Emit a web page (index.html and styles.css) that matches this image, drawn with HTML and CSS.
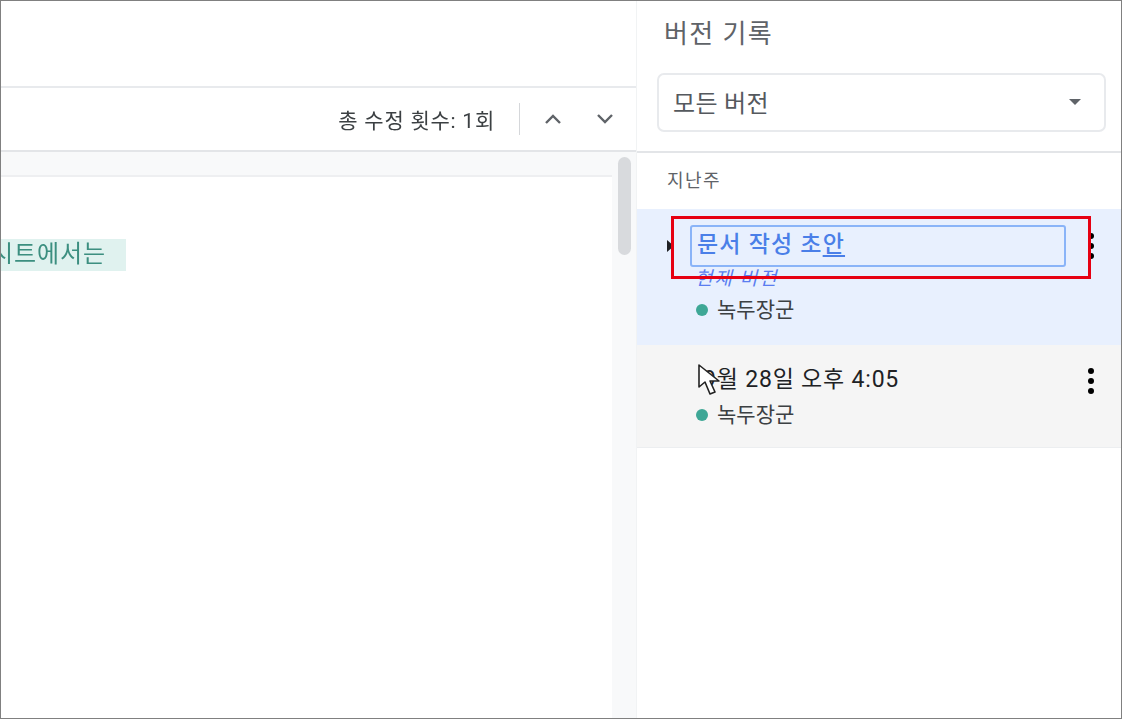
FILE: index.html
```html
<!DOCTYPE html>
<html lang="ko">
<head>
    <meta charset="UTF-8">
    <meta name="viewport" content="width=device-width, initial-scale=1.0">
    <title>버전 기록</title>
    <link rel="stylesheet" href="styles.css">
</head>
<body>
    <div class="window">
        <div class="main">
            <div class="topbar"></div>
            <div class="toolbar">
                <span class="edit-count">총 수정 횟수: 1회</span>
                <span class="toolbar-sep"></span>
                <svg class="chevron chevron-up" width="20" height="14" viewBox="0 0 20 14"><path d="M3 11 L10 4 L17 11" fill="none" stroke="#5f6368" stroke-width="2.4"/></svg>
                <svg class="chevron" width="20" height="14" viewBox="0 0 20 14"><path d="M3 3 L10 10 L17 3" fill="none" stroke="#5f6368" stroke-width="2.4"/></svg>
            </div>
            <div class="doc-area">
                <div class="page">
                    <div class="highlight-line"><span class="highlight">시트에서는</span></div>
                </div>
                <div class="scroll-track"><div class="scroll-thumb"></div></div>
            </div>
        </div>
        <div class="panel">
            <div class="panel-head">
                <h1>버전 기록</h1>
                <div class="select">
                    <span>모든 버전</span>
                    <span class="select-arrow"></span>
                </div>
            </div>
            <div class="group-label">지난주</div>
            <div class="version version-current">
                <span class="expander"></span>
                <div class="version-name">문서 작성 <span class="composing">초<u>안</u></span></div>
                <div class="version-note">현재 버전</div>
                <div class="author"><span class="dot"></span>녹두장군</div>
                <div class="more"><i></i><i></i><i></i></div>
            </div>
            <div class="version version-hover">
                <div class="version-date">9월 28일 오후 4:05</div>
                <div class="author"><span class="dot"></span>녹두장군</div>
                <div class="more"><i></i><i></i><i></i></div>
                <svg class="cursor" width="25" height="34" viewBox="0 0 25 34"><path d="M2 2 L2 24 L8 19 L13 31 L18 29 L13 18 L22 18 Z" fill="#fff" stroke="#222" stroke-width="1.6" stroke-linejoin="round"/></svg>
            </div>
            <div class="callout"></div>
        </div>
    </div>
</body>
</html>
```

FILE: styles.css
```css
* {
    box-sizing: border-box;
}
html, body {
    margin: 0;
    height: 100%;
}
body {
    font-family: Roboto, "Noto Sans CJK KR", sans-serif;
    background: white;
    overflow: hidden;
}
.window {
    display: flex;
    height: 719px;
    border: 1px solid #808080;
    filter: blur(0.4px);
}
.main {
    width: 636px;
    display: flex;
    flex-direction: column;
    border-right: 1px solid #f1f3f4;
}
.topbar {
    height: 87px;
    border-bottom: 2px solid #e8eaed;
}
.toolbar {
    height: 64px;
    display: flex;
    align-items: center;
    justify-content: flex-end;
    padding-right: 21px;
    border-bottom: 2px solid #e3e5e8;
}
.edit-count {
    font-size: 21px;
    color: #3c4043;
    margin-right: 24px;
    letter-spacing: 0.75px;
}
.toolbar-sep {
    width: 1px;
    height: 32px;
    background: #d5d7da;
    margin-right: 23px;
}
.chevron {
    display: block;
}
.chevron-up {
    margin-right: 32px;
}
.doc-area {
    flex: 1;
    display: flex;
    background: #f8f9fa;
    padding-top: 23px;
    min-height: 0;
}
.page {
    width: 611px;
    background: white;
    border-top: 2px solid #eeeff1;
    padding-top: 62px;
    overflow: hidden;
}
.highlight-line {
    height: 32px;
}
.highlight {
    display: block;
    width: 125px;
    height: 32px;
    line-height: 30px;
    text-indent: -10px;
    letter-spacing: 0.9px;
    white-space: nowrap;
    overflow: hidden;
    background: #e0f2ef;
    color: #3c8f80;
    font-size: 24px;
}
.scroll-track {
    flex: 1;
    position: relative;
}
.scroll-thumb {
    position: absolute;
    top: -18px;
    left: 6px;
    width: 13px;
    height: 98px;
    border-radius: 7px;
    background: #d8dadd;
}
.panel {
    flex: 1;
    position: relative;
    background: white;
}
.panel-head {
    height: 152px;
    padding: 14px 15px 0 20px;
    border-bottom: 2px solid #e3e5e8;
}
.panel-head h1 {
    margin: 0 0 20px 7px;
    font-size: 26px;
    line-height: 38px;
    font-weight: 400;
    letter-spacing: 1.4px;
    color: #5f6368;
}
.select {
    height: 59px;
    display: flex;
    align-items: center;
    justify-content: space-between;
    padding: 0 23px 2px 14px;
    border: 2px solid #e8eaed;
    border-radius: 7px;
    font-size: 24px;
    letter-spacing: 0.3px;
    color: #55595e;
}
.select-arrow {
    width: 0;
    height: 0;
    border-left: 6px solid transparent;
    border-right: 6px solid transparent;
    border-top: 6px solid #5f6368;
}
.group-label {
    height: 56px;
    padding: 17px 0 0 30px;
    font-size: 18px;
    line-height: 22px;
    letter-spacing: 1.5px;
    color: #5f6368;
}
.version {
    position: relative;
    padding-left: 58px;
}
.version-current {
    height: 136px;
    padding-top: 16px;
    background: #e8f0fe;
}
.version-hover {
    height: 103px;
    padding-top: 16px;
    background: #f5f5f5;
    border-bottom: 1px solid #eceef0;
}
.expander {
    position: absolute;
    left: 30px;
    top: 31px;
    width: 0;
    height: 0;
    border-top: 6px solid transparent;
    border-bottom: 6px solid transparent;
    border-left: 7px solid #202124;
}
.version-name {
    width: 376px;
    height: 42px;
    margin-left: -5px;
    padding-left: 5px;
    border: 2px solid #8ab4f8;
    border-radius: 3px;
    font-size: 23px;
    line-height: 35px;
    letter-spacing: 1.2px;
    font-weight: 500;
    color: #4a7fe8;
}
.composing u {
    text-underline-offset: 3px;
}
.version-note {
    font-size: 19px;
    line-height: 24px;
    letter-spacing: 1.7px;
    font-style: italic;
    color: #5a7df0;
}
.version-date {
    height: 36px;
    padding-left: 8px;
    font-size: 23px;
    line-height: 38px;
    letter-spacing: 0.8px;
    color: #202124;
}
.author {
    display: flex;
    align-items: center;
    gap: 9px;
    padding-left: 1px;
    font-size: 21px;
    line-height: 30px;
    color: #3c4043;
}
.version-current .author {
    margin-top: 4px;
}
.version-hover .author {
    margin-top: 3px;
}
.dot {
    width: 12px;
    height: 12px;
    border-radius: 50%;
    background: #3ea796;
}
.more {
    position: absolute;
    right: 27px;
    top: 24px;
    display: flex;
    flex-direction: column;
    gap: 4px;
}
.version-hover .more {
    top: 23px;
}
.more i {
    display: block;
    width: 6px;
    height: 6px;
    border-radius: 50%;
    background: black;
}
.cursor {
    position: absolute;
    left: 60px;
    top: 18px;
}
.callout {
    position: absolute;
    left: 34px;
    top: 215px;
    width: 420px;
    height: 63px;
    border: 3px solid #e60012;
}
```
